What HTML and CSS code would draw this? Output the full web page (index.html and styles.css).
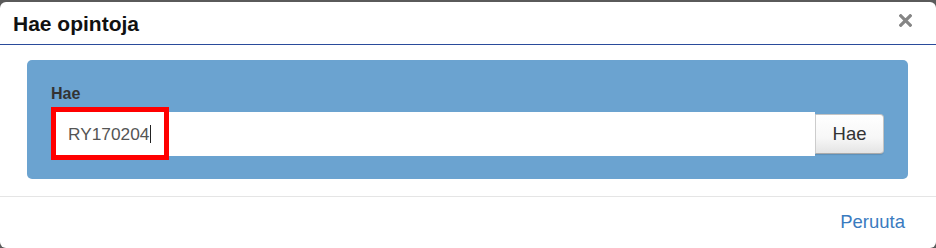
FILE: index.html
```html
<!DOCTYPE html>
<html lang="fi">
<head>
<meta charset="utf-8">
<title>Hae opintoja</title>
<link rel="stylesheet" href="styles.css">
</head>
<body>
<div class="modal">
  <div class="modal-header">
    <h4 class="modal-title">Hae opintoja</h4>
    <button class="close" type="button" aria-label="Sulje">
      <svg width="13" height="13" viewBox="0 0 13 13"><path d="M1.8 1.8 L11.2 11.2 M11.2 1.8 L1.8 11.2" stroke="#858585" stroke-width="3.2" stroke-linecap="square"/></svg>
    </button>
  </div>
  <div class="modal-body">
    <div class="search-panel">
      <label class="search-label">Hae</label>
      <div class="search-row">
        <div class="input-wrap">
          <div class="search-input">RY170204<span class="caret"></span></div>
          <div class="highlight"></div>
        </div>
        <button class="search-btn" type="button">Hae</button>
      </div>
    </div>
  </div>
  <div class="modal-footer">
    <a class="cancel-link" href="#">Peruuta</a>
  </div>
</div>
</body>
</html>
```

FILE: styles.css
```css
html, body {
  margin: 0;
  padding: 0;
}
body {
  background: #5a5a5a;
  font-family: "Liberation Sans", Arial, sans-serif;
  width: 936px;
  height: 248px;
  overflow: hidden;
}
.modal {
  margin-top: 2px;
  height: 246px;
  background: #fff;
  border-radius: 6px;
  overflow: hidden;
}
.modal-header {
  display: flex;
  justify-content: space-between;
  align-items: flex-start;
  height: 43px;
  padding: 10px 24px 0 13px;
  box-sizing: border-box;
  border-bottom: 1px solid #2a4b9b;
}
.modal-title {
  margin: 0;
  font-size: 21px;
  line-height: 23px;
  font-weight: bold;
  color: #111;
}
.close {
  margin: 2px 0 0 0;
  padding: 0;
  border: 0;
  background: none;
  width: 13px;
  height: 13px;
  display: block;
}
.close svg {
  display: block;
}
.modal-body {
  padding: 15px 28px 17px 27px;
}
.search-panel {
  background: #6ba3d0;
  border-radius: 5px;
  padding: 25px 24px 23px 24px;
}
.search-label {
  display: block;
  font-size: 16px;
  line-height: 18px;
  font-weight: bold;
  color: #333;
  margin-bottom: 9px;
}
.search-row {
  display: flex;
  align-items: center;
}
.input-wrap {
  position: relative;
  width: 764px;
}
.search-input {
  height: 44px;
  background: #fff;
  box-sizing: border-box;
  padding-left: 17px;
  font-size: 17.3px;
  line-height: 44px;
  color: #555;
  display: flex;
  align-items: center;
}
.caret {
  display: inline-block;
  width: 1px;
  height: 18px;
  background: #222;
  margin-left: 1px;
}
.highlight {
  position: absolute;
  left: 0;
  top: -5px;
  width: 118px;
  height: 53px;
  box-sizing: border-box;
  border: 5.5px solid #ff0000;
}
.search-btn {
  width: 69px;
  height: 40px;
  box-sizing: border-box;
  border: 1px solid #c4c4c4;
  border-bottom-color: #aaa;
  border-left: 1px solid #ccc;
  border-radius: 0 4px 4px 0;
  background: linear-gradient(#ffffff 0%, #f7f7f7 60%, #e4e4e4 100%);
  box-shadow: 0 1px 1px rgba(0,0,0,0.12);
  font-family: "Liberation Sans", Arial, sans-serif;
  font-size: 18.5px;
  color: #333;
  padding: 0 0 1px 0;
}
.modal-footer {
  border-top: 1px solid #e5e5e5;
  padding: 15px 31px 0 0;
  text-align: right;
}
.cancel-link {
  font-size: 18.5px;
  line-height: 20px;
  color: #3a7bbf;
  text-decoration: none;
}
```
